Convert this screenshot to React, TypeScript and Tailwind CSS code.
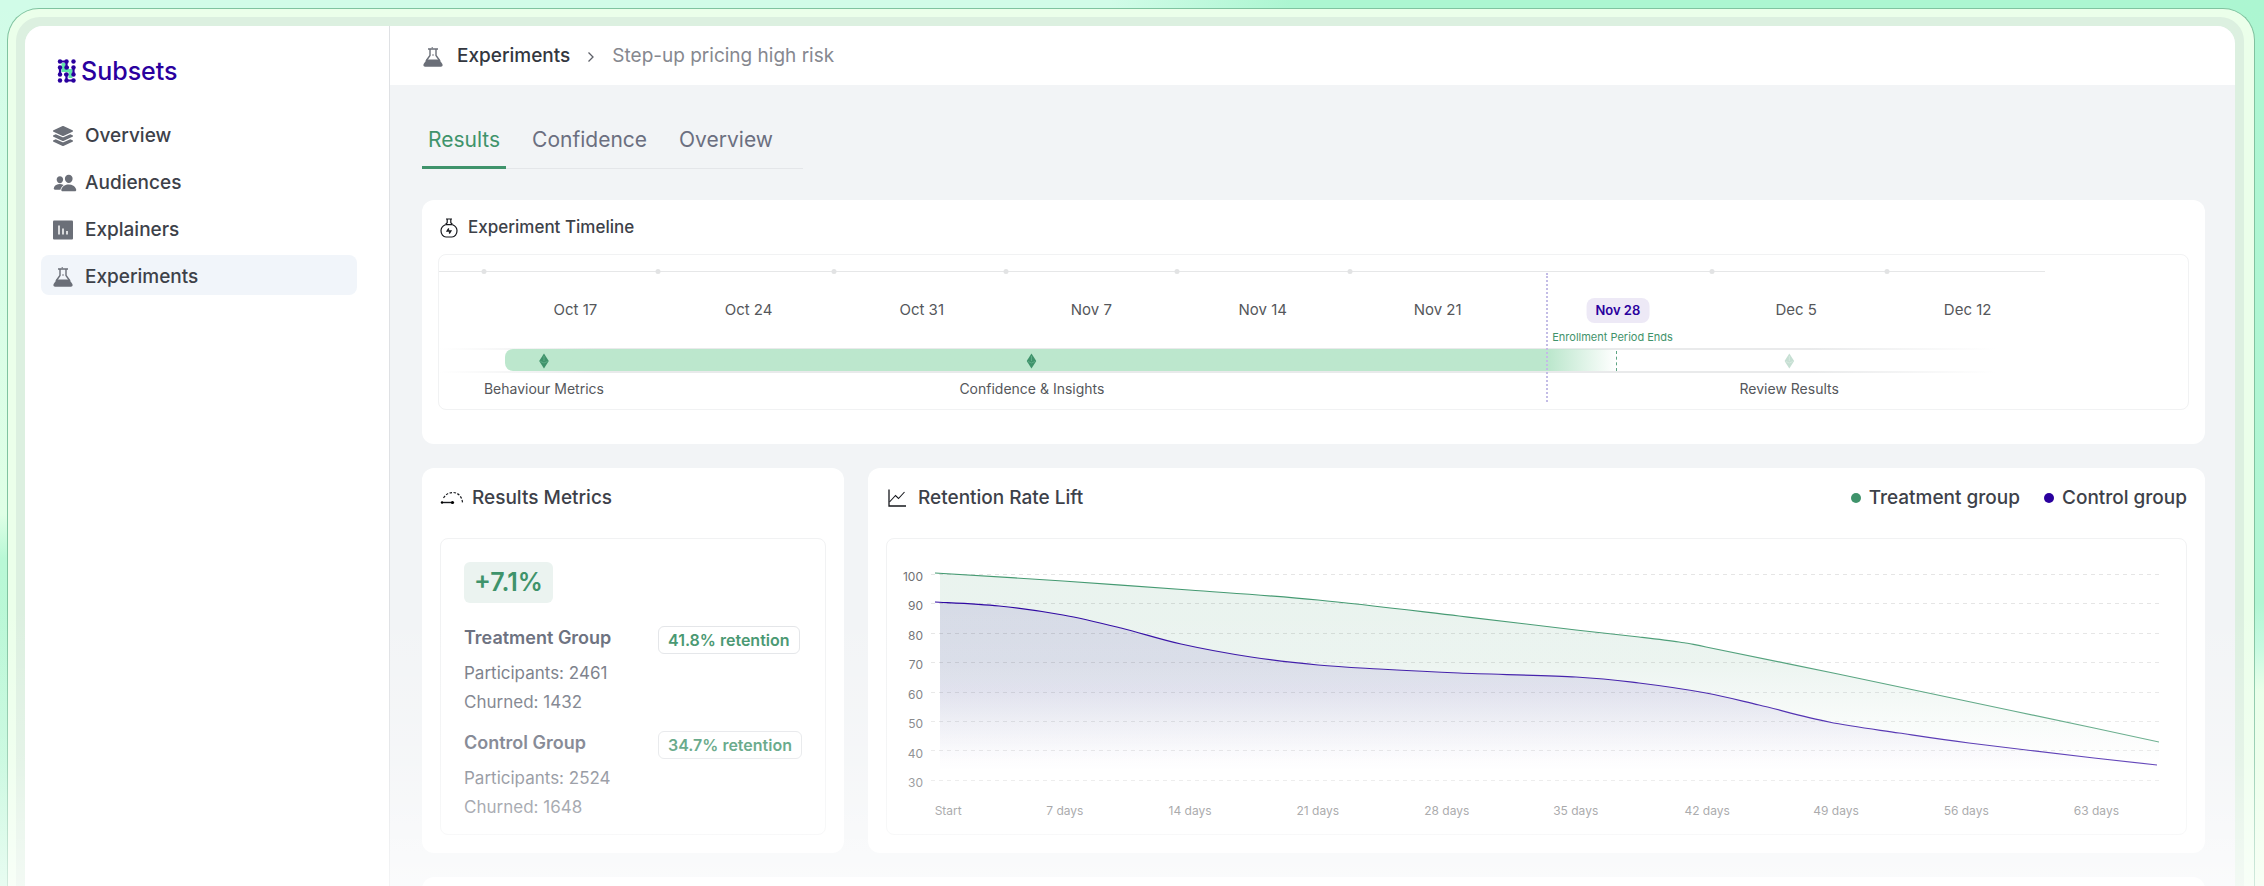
import React from 'react';
import { FaLayerGroup } from 'react-icons/fa';
import { IoPeople } from 'react-icons/io5';

interface Point {
    x: number;
    y: number;
}

interface Mark {
    label: string;
    at: number;
}

// Timeline positions are percentages of the track width
const tickMarks = [2.6, 12.5, 22.6, 32.4, 42.2, 52.1, 72.8, 82.8];

const dates: Mark[] = [
    { label: 'Oct 17', at: 7.8 },
    { label: 'Oct 24', at: 17.7 },
    { label: 'Oct 31', at: 27.6 },
    { label: 'Nov 7', at: 37.3 },
    { label: 'Nov 14', at: 47.1 },
    { label: 'Nov 21', at: 57.1 },
    { label: 'Nov 28', at: 67.4 },
    { label: 'Dec 5', at: 77.6 },
    { label: 'Dec 12', at: 87.4 }
];

const milestones = [
    { label: 'Behaviour Metrics', at: 6, done: true },
    { label: 'Confidence & Insights', at: 33.9, done: true },
    { label: 'Review Results', at: 77.2, done: false }
];

const groups = [
    { name: 'Treatment Group', retention: '41.8%', participants: 2461, churned: 1432 },
    { name: 'Control Group', retention: '34.7%', participants: 2524, churned: 1648 }
];

const yLabels = [100, 90, 80, 70, 60, 50, 40, 30];

const xLabels: Mark[] = [
    { label: 'Start', at: 1.4 },
    { label: '7 days', at: 10.9 },
    { label: '14 days', at: 21.1 },
    { label: '21 days', at: 31.5 },
    { label: '28 days', at: 42 },
    { label: '35 days', at: 52.5 },
    { label: '42 days', at: 63.2 },
    { label: '49 days', at: 73.7 },
    { label: '56 days', at: 84.3 },
    { label: '63 days', at: 94.9 }
];

const treatment: Point[] = [
    { x: 4, y: 12 },
    { x: 132, y: 20 },
    { x: 258, y: 29 },
    { x: 387, y: 39 },
    { x: 528, y: 55 },
    { x: 645, y: 69 },
    { x: 708, y: 76 },
    { x: 748, y: 81 },
    { x: 775, y: 86 },
    { x: 907, y: 113 },
    { x: 1035, y: 140 },
    { x: 1163, y: 167 },
    { x: 1228, y: 181 }
];

const control: Point[] = [
    { x: 4, y: 41 },
    { x: 68, y: 45 },
    { x: 132, y: 54 },
    { x: 190, y: 67 },
    { x: 250, y: 83 },
    { x: 320, y: 96 },
    { x: 387, y: 104 },
    { x: 448, y: 108 },
    { x: 528, y: 112 },
    { x: 645, y: 116 },
    { x: 708, y: 122 },
    { x: 775, y: 132 },
    { x: 828, y: 144 },
    { x: 898, y: 161 },
    { x: 968, y: 172 },
    { x: 1038, y: 182 },
    { x: 1163, y: 197 },
    { x: 1226, y: 204 }
];

function smoothLine(points: Point[]): string {
    let d = `M${points[0].x} ${points[0].y}`;
    for (let i = 0; i < points.length - 1; i++) {
        const p0 = points[i - 1] ?? points[i];
        const p1 = points[i];
        const p2 = points[i + 1];
        const p3 = points[i + 2] ?? p2;
        d += ` C${p1.x + (p2.x - p0.x) / 6} ${p1.y + (p2.y - p0.y) / 6} ${p2.x - (p3.x - p1.x) / 6} ${p2.y - (p3.y - p1.y) / 6} ${p2.x} ${p2.y}`;
    }
    return d;
}

function LogoMark() {
    return (
        <svg viewBox="0 0 20 26" className="h-[26px] w-5" aria-hidden="true">
            <path d="M4.500 5h4v6h7v9h-4v-6h-7z" fill="#62e6ab" />
            <path
                d="M3 3.500H9.500V9.500M16.500 9.500V16.500M3 9.500V16.500M9.500 16.500V22.500H16.500M9.500 9.500H12M7 16.500H9.500"
                fill="none"
                stroke="#2a009e"
                strokeWidth="2.200"
            />
            <g fill="#2a009e">
                {[3.5, 9.5, 16.5, 22.5].map((y) => [3, 9.5, 16.5].map((x) => <circle key={`${x}-${y}`} cx={x} cy={y} r="2.200" />))}
            </g>
        </svg>
    );
}

function FlaskIcon() {
    return (
        <svg viewBox="0 0 20 20" className="h-5 w-5 shrink-0" fill="none" aria-hidden="true">
            <path d="M5 2h10M7 2.500v6L3 14M13 2.500v6l4 5.500" stroke="#6b6f78" strokeWidth="1.400" />
            <path d="M3.800 12.500h12.400l3 4.300c.9 1.400.2 2.900-1.300 2.900H2.100c-1.500 0-2.200-1.500-1.300-2.900z" fill="#6b6f78" />
            <circle cx="10" cy="8" r=".8" fill="#6b6f78" />
            <circle cx="9.200" cy=".8" r=".7" fill="#6b6f78" />
        </svg>
    );
}

function ExplainersIcon() {
    return (
        <svg viewBox="0 0 20 20" className="h-5 w-5 shrink-0" aria-hidden="true">
            <rect width="20" height="19" y=".5" rx="1" fill="#6b6f78" />
            <path d="M6 5.500v9M10 8.500v6M14 11v3.500" stroke="#fff" strokeWidth="1.500" />
        </svg>
    );
}

function TimelineIcon() {
    return (
        <svg viewBox="0 0 18 20" className="h-5 w-[18px]" fill="none" stroke="#16181d" strokeWidth="1.200" aria-hidden="true">
            <path d="M6 1h6M7.200 1.500v3.200L5.500 6.500M10.800 1.500v3.200l1.700 1.800M5.300 6.700h7.400" />
            <path d="M5.300 6.700C2.500 8 1 10 1 12.700c0 3.600 2.200 6.300 5 6.300h6c2.800 0 5-2.700 5-6.300 0-2.700-1.500-4.700-4.300-6" />
            <path d="M8.800 10.500 7.200 13h3.600L9.200 15.500" strokeWidth="1.400" />
        </svg>
    );
}

function MetricsIcon() {
    return (
        <svg viewBox="0 0 24 14" className="h-3.5 w-6" fill="none" stroke="#16181d" aria-hidden="true">
            <path d="M3.500 7C6.500 2.500 9.500 1.500 13 1.500c5 0 9 4 9.500 10" strokeWidth="1.200" strokeDasharray="2.500 1.500" />
            <path d="M2 11.500h11" strokeWidth="1.400" />
            <circle cx="2" cy="11.500" r="1.200" fill="#000" stroke="none" />
            <circle cx="12.500" cy="11.500" r="1.600" fill="#000" stroke="none" />
        </svg>
    );
}

function ChartIcon() {
    return (
        <svg viewBox="0 0 18 18" className="h-[18px] w-[18px]" fill="none" stroke="#16181d" aria-hidden="true">
            <path d="M1 .5V17h17" strokeWidth="1.300" />
            <path d="m1.500 13 6-6.500 3 3 6-6.500" strokeWidth="1.100" />
        </svg>
    );
}

function Diamond({ done }: { done: boolean }) {
    return (
        <svg viewBox="0 0 10 16" className="h-4 w-2.5" aria-hidden="true">
            <path d="m5 .5 4.800 7.500L5 15.500.2 8z" fill={done ? '#3f936b' : '#c6dfd3'} />
            <path d="M1.500 8.500 5 10l3.500-1.500M5 3v5" fill="none" stroke={done ? '#7cc4a0' : '#e6f2ec'} strokeWidth=".5" />
        </svg>
    );
}

const navItems = [
    { label: 'Overview', icon: <FaLayerGroup className="h-5 w-5 shrink-0" />, active: false },
    { label: 'Audiences', icon: <IoPeople className="h-6 w-6 shrink-0" />, active: false },
    { label: 'Explainers', icon: <ExplainersIcon />, active: false },
    { label: 'Experiments', icon: <FlaskIcon />, active: true }
];

function Sidebar() {
    return (
        <aside className="w-[365px] shrink-0 border-r border-[#dfe1e4] bg-white pr-8 pl-4">
            <div className="flex items-center gap-1 pt-[31px] pl-4">
                <LogoMark />
                <span className="text-[25px] leading-7 font-medium text-[#2a009e]">Subsets</span>
            </div>
            <nav className="mt-[29px] flex flex-col gap-[7px]">
                {navItems.map((item) => (
                    <a
                        key={item.label}
                        href="#"
                        className={`flex h-10 items-center rounded-lg pt-1 pl-3 text-[19px] font-medium text-[#3d4149] ${item.active ? 'bg-[#f1f5fa]' : ''}`}
                    >
                        <span className="flex w-8 items-center text-[#6b6f78]">{item.icon}</span>
                        {item.label}
                    </a>
                ))}
            </nav>
        </aside>
    );
}

function Timeline() {
    return (
        <section className="h-[244px] rounded-xl bg-white px-4 pt-4">
            <h2 className="flex h-6 items-center gap-2.5 pl-0.5 text-[17px] font-medium text-[#3d4149]">
                <TimelineIcon />
                Experiment Timeline
            </h2>
            <div className="relative mt-3.5 h-[156px] rounded-lg border border-[#f1f2f3] text-sm leading-5 text-[#55575b]">
                <div className="absolute top-4 left-0 h-px w-[91.800%] bg-[#e6e7e8]" />
                {tickMarks.map((at) => (
                    <span
                        key={at}
                        className="absolute top-3.5 h-[5px] w-[5px] -translate-x-1/2 rounded-full bg-[#e2e3e4]"
                        style={{ left: `${at}%` }}
                    />
                ))}

                {dates.map((date) => (
                    <span
                        key={date.label}
                        className={
                            date.label === 'Nov 28'
                                ? 'absolute top-[43px] -translate-x-1/2 rounded-lg bg-[#ede9f6] px-[9px] py-0.5 text-[13px] leading-[21px] font-semibold whitespace-nowrap text-[#2a009e]'
                                : 'absolute top-[45px] -translate-x-1/2 text-[15px] whitespace-nowrap'
                        }
                        style={{ left: `${date.at}%` }}
                    >
                        {date.label}
                    </span>
                ))}
                <span className="absolute top-[74px] left-[67.100%] -translate-x-1/2 text-[11px] leading-4 whitespace-nowrap text-[#3f936b]">
                    Enrollment Period Ends
                </span>

                {/* Enrollment track */}
                <div className="absolute top-[93px] left-0 h-0.5 w-[89%] bg-[linear-gradient(to_right,transparent,#e9eaeb_10%,#e9eaeb_88%,transparent)]" />
                <div className="absolute top-[116px] left-0 h-0.5 w-[89%] bg-[linear-gradient(to_right,transparent,#e9eaeb_10%,#e9eaeb_88%,transparent)]" />
                <div className="absolute top-[94px] right-[32.700%] left-[3.800%] h-[22px] rounded-l-lg bg-linear-to-r from-[#bce7cd] from-94% to-transparent" />
                <div className="absolute top-[18px] left-[63.300%] h-[129px] border-l-2 border-dotted border-[#c3bce6]" />
                <div className="absolute top-[96px] left-[67.300%] h-5 border-l border-dashed border-[#5da583]" />

                {milestones.map((m) => (
                    <div
                        key={m.label}
                        className="absolute top-[98px] flex -translate-x-1/2 flex-col items-center gap-2.5 whitespace-nowrap"
                        style={{ left: `${m.at}%` }}
                    >
                        <Diamond done={m.done} />
                        {m.label}
                    </div>
                ))}
            </div>
        </section>
    );
}

function ResultsMetrics() {
    return (
        <section className="w-[422px] shrink-0 rounded-xl bg-white p-[18px]">
            <h2 className="flex h-6 items-center gap-2 text-[19px] font-medium text-[#3d4149]">
                <MetricsIcon />
                Results Metrics
            </h2>
            <div className="mt-7 h-[297px] rounded-lg border border-[#f1f2f3] px-[23px] pt-[23px]">
                <div className="w-fit rounded-md bg-[#ebf3f0] px-2.5 text-[25px] leading-[41px] font-semibold text-[#3f936b]">
                    +7.1%
                </div>
                <div className="mt-[21px] flex flex-col gap-3">
                    {groups.map((group) => (
                        <div key={group.name} className="text-[17px] leading-[29px] text-[#6f7480]">
                            <div className="mb-[5px] grid h-[30px] grid-cols-[1fr_144px]">
                                <h3 className="text-lg leading-7 font-semibold text-[#666b7a]">{group.name}</h3>
                                <span className="flex h-7 w-fit items-center self-end rounded-md border border-[#e3e5e8] px-[9px] text-base font-semibold text-[#3f936b]">
                                    {group.retention} retention
                                </span>
                            </div>
                            <p>Participants: {group.participants}</p>
                            <p>Churned: {group.churned}</p>
                        </div>
                    ))}
                </div>
            </div>
        </section>
    );
}

function RetentionChart() {
    const treatmentLine = smoothLine(treatment);
    const controlLine = smoothLine(control);

    return (
        <section className="min-w-0 flex-1 rounded-xl bg-white p-[18px]">
            <div className="flex h-6 items-center justify-between text-[19px] font-medium text-[#3d4149]">
                <h2 className="flex items-center gap-3 pl-0.5">
                    <ChartIcon />
                    Retention Rate Lift
                </h2>
                <ul className="flex items-center gap-6">
                    <li className="flex items-center gap-2">
                        <span className="h-2.5 w-2.5 rounded-full bg-[#3f936b]" />
                        Treatment group
                    </li>
                    <li className="flex items-center gap-2">
                        <span className="h-2.5 w-2.5 rounded-full bg-[#2a009e]" />
                        Control group
                    </li>
                </ul>
            </div>
            <div className="mt-7 flex h-[297px] rounded-lg border border-[#f1f2f3] pr-[27px] text-xs text-[#6f7073]">
                <div className="flex w-11 shrink-0 flex-col pt-[23px] pr-2 text-right">
                    {yLabels.map((label, i) => (
                        <span key={label} className={i % 2 ? 'h-[30px] leading-[30px]' : 'h-[29px] leading-[29px]'}>
                            {label}
                        </span>
                    ))}
                </div>
                <div className="min-w-0 flex-1 pt-[22px]">
                    <svg viewBox="0 0 1228 230" preserveAspectRatio="none" className="block h-[230px] w-full" fill="none">
                        <defs>
                            <linearGradient id="treatmentFill" gradientUnits="userSpaceOnUse" x1="0" y1="100" x2="0" y2="200">
                                <stop stopColor="#3f936b" stopOpacity=".11" />
                                <stop offset="1" stopColor="#3f936b" stopOpacity="0" />
                            </linearGradient>
                            <linearGradient id="controlFill" gradientUnits="userSpaceOnUse" x1="0" y1="130" x2="0" y2="210">
                                <stop stopColor="#2a009e" stopOpacity=".1" />
                                <stop offset=".6" stopColor="#2a009e" stopOpacity=".04" />
                                <stop offset="1" stopColor="#2a009e" stopOpacity="0" />
                            </linearGradient>
                            <clipPath id="plot">
                                <rect x="9" y="0" width="1219" height="230" />
                            </clipPath>
                        </defs>
                        <g clipPath="url(#plot)">
                            <path d={`${treatmentLine} V220 H4 Z`} fill="url(#treatmentFill)" />
                            <path d={`${controlLine} V220 H4 Z`} fill="url(#controlFill)" />
                        </g>
                        {yLabels.map((label, i) => (
                            <path
                                key={label}
                                d={`M0 ${13.5 + Math.round(i * 29.4)}H1228`}
                                stroke="#000"
                                strokeOpacity=".1"
                                strokeDasharray="4 4"
                            />
                        ))}
                        <path d={treatmentLine} stroke="#459a72" strokeWidth="1.200" />
                        <path d={controlLine} stroke="#2f08a2" strokeWidth="1.200" />
                    </svg>
                    <div className="relative h-10">
                        {xLabels.map((label) => (
                            <span
                                key={label.label}
                                className="absolute top-3 -translate-x-1/2 whitespace-nowrap"
                                style={{ left: `${label.at}%` }}
                            >
                                {label.label}
                            </span>
                        ))}
                    </div>
                </div>
            </div>
        </section>
    );
}

export default function App(): React.ReactElement {
    return (
        <div className="relative flex h-screen overflow-hidden bg-[linear-gradient(to_right,#d1fce8_49%,#acf6d1_57%),linear-gradient(to_bottom,#d1fce8_0%,#dfffe6_58%,#b9f8d6_63%,#bdf7d8_100%),linear-gradient(to_bottom,#acf6d1_0%,#b2f6d3_68%,#c2fade_73%,#e6ffe6_78%,#e9ffe4_100%)] bg-[length:100%_10px,53%_100%,47%_100%] bg-[position:top,left,right] bg-no-repeat pt-2 pr-[9px] pl-[7px] font-[Inter,sans-serif]">
            <div className="flex min-w-0 flex-1 rounded-t-[32px] border border-b-0 border-[#80c3a0] bg-[#ebffea] pt-2 pr-2.5 pl-2">
                <div className="flex min-w-0 flex-1 rounded-t-3xl bg-[#dcf0e0] px-[9px] pt-[9px]">
                    <div className="flex min-w-0 flex-1 overflow-hidden rounded-t-[18px] bg-[#f2f4f6]">
                        <Sidebar />
                        <main className="flex min-w-0 flex-1 flex-col">
                            <header className="flex h-[59px] shrink-0 items-center bg-white pt-0.5 pl-[33px] text-[19px]">
                                <FlaskIcon />
                                <a href="#" className="ml-3.5 font-medium text-[#33373f]">
                                    Experiments
                                </a>
                                <svg viewBox="0 0 8 12" className="mx-[17px] h-3 w-2" fill="none" aria-hidden="true">
                                    <path d="m1.500 1.500 4.500 4.500-4.500 4.500" stroke="#5d6068" strokeWidth="1.300" />
                                </svg>
                                <span className="text-[#86888f]">Step-up pricing high risk</span>
                            </header>

                            <div className="flex flex-1 flex-col pr-[30px] pl-8">
                                <div role="tablist" className="mt-8 flex w-[381px] shrink-0 gap-5 border-b border-[#e4e6e9] text-[21px] text-[#6b6f80]">
                                    <button
                                        role="tab"
                                        aria-selected="true"
                                        className="-mb-px h-[52px] border-b-[3px] border-[#3f936b] px-1.5 pb-1 text-[#3f936b]"
                                    >
                                        Results
                                    </button>
                                    <button role="tab" aria-selected="false" className="-mb-px h-[52px] border-b-[3px] border-transparent px-1.5 pb-1">
                                        Confidence
                                    </button>
                                    <button role="tab" aria-selected="false" className="-mb-px h-[52px] border-b-[3px] border-transparent px-1.5 pb-1">
                                        Overview
                                    </button>
                                </div>

                                <div className="mt-[31px] flex flex-1 flex-col gap-6">
                                    <Timeline />
                                    <div className="flex gap-6">
                                        <ResultsMetrics />
                                        <RetentionChart />
                                    </div>
                                    <section className="h-60 shrink-0 rounded-xl bg-white" />
                                </div>
                            </div>
                        </main>
                    </div>
                </div>
            </div>
            {/* Fade towards the bottom edge */}
            <div className="pointer-events-none absolute inset-x-0 bottom-0 h-[280px] bg-linear-to-b from-transparent via-white/25 via-55% to-white/65" />
        </div>
    );
}
